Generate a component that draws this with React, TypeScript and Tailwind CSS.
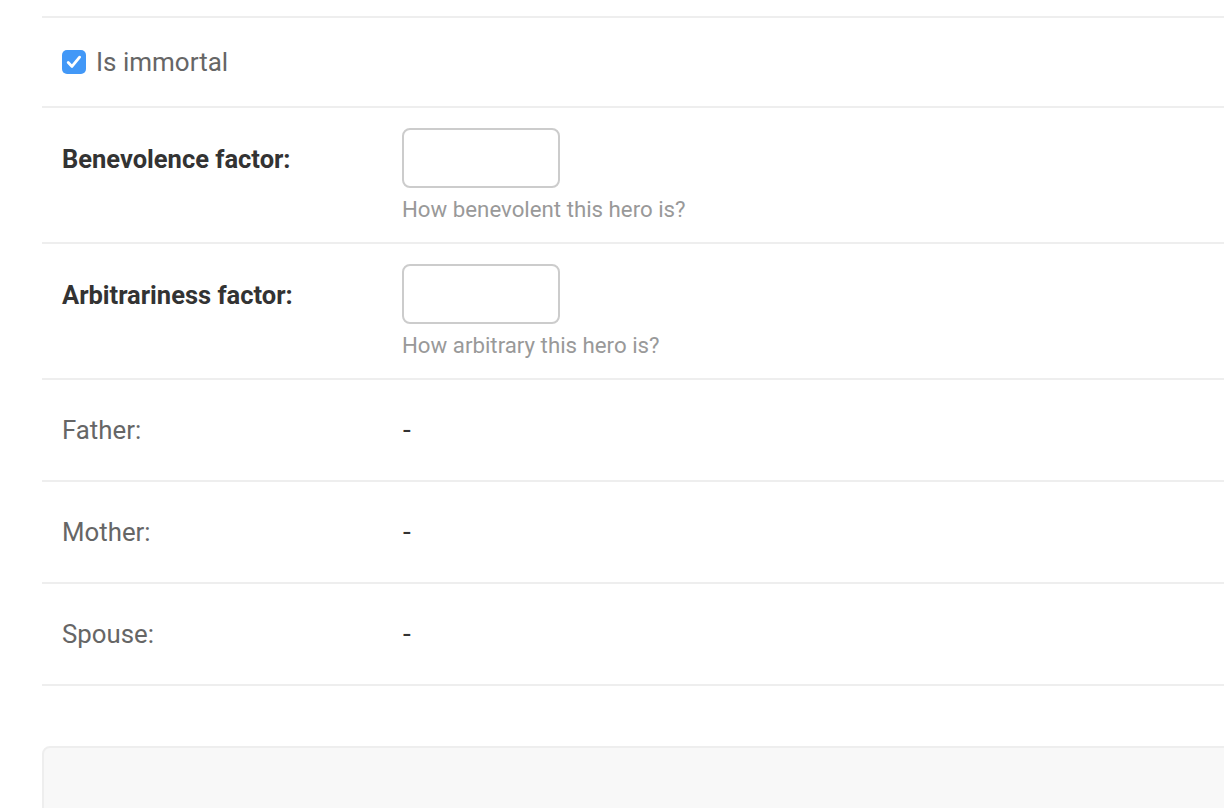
import React from "react";

const font = { fontFamily: "Roboto, 'Noto Sans', sans-serif" };

function Check() {
  return (
    <span className="flex h-[24px] w-[24px] items-center justify-center rounded-[5px] bg-[#4298f7]">
      <svg width="24" height="24" viewBox="0 0 24 24" fill="none">
        <path d="M6.2 12.6 L10 16.4 L17.6 7.2" stroke="white" strokeWidth="2.8" strokeLinecap="round" strokeLinejoin="round" />
      </svg>
    </span>
  );
}

function InputRow({ label, help }: { label: string; help: string }) {
  return (
    <div className="flex h-[136px] border-b-2 border-[#eee] px-[20px] pt-[20px]">
      <div className="w-[340px] pt-[16px] text-[25.5px] leading-[30px] font-bold text-[#333]">{label}</div>
      <div className="flex flex-col">
        <div className="h-[60px] w-[158px] rounded-[8px] border-2 border-[#ccc] bg-white" />
        <div className="mt-[6px] text-[22.25px] leading-[30px] text-[#999]">{help}</div>
      </div>
    </div>
  );
}

function ReadRow({ label }: { label: string }) {
  return (
    <div className="flex h-[102px] items-center border-b-2 border-[#eee] px-[20px]">
      <div className="w-[340px] text-[25.8px] leading-[30px] text-[#666]">{label}</div>
      <div className="pl-[1px] text-[28px] leading-[30px] text-[#333]">-</div>
    </div>
  );
}

export default function App() {
  return (
    <div className="h-[808px] w-[1224px] overflow-hidden bg-white" style={font}>
      <div className="ml-[42px] w-[1300px]">
        <div className="h-[18px] border-b-2 border-[#eee]" />
        <div className="flex h-[90px] items-center gap-[10px] border-b-2 border-[#eee] px-[20px]">
          <Check />
          <span className="text-[26px] leading-[30px] text-[#666]">Is immortal</span>
        </div>
        <InputRow label="Benevolence factor:" help="How benevolent this hero is?" />
        <InputRow label="Arbitrariness factor:" help="How arbitrary this hero is?" />
        <ReadRow label="Father:" />
        <ReadRow label="Mother:" />
        <ReadRow label="Spouse:" />
        <div className="mt-[60px] h-[200px] rounded-tl-[8px] border-2 border-[#eee] bg-[#f8f8f8]" />
      </div>
    </div>
  );
}
